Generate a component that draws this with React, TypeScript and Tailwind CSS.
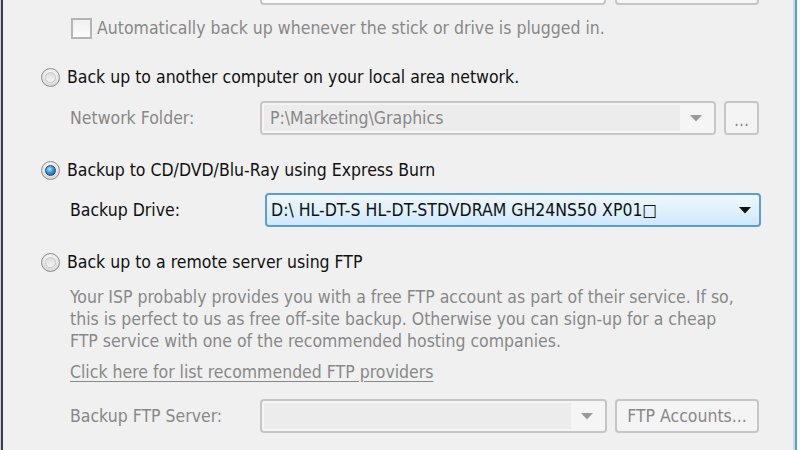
import React from "react";

const FONT = "[font-family:'DejaVu_Sans_Condensed','DejaVu_Sans',sans-serif]";

function Radio({ checked }: { checked?: boolean }) {
  return (
    <span className="flex h-[19px] w-[19px] shrink-0 items-center justify-center rounded-full border border-[#8e8e8e] bg-[radial-gradient(circle_at_50%_35%,#ffffff,#e2e2e2_60%,#c9c9c9)]">
      {checked ? (
        <span className="h-[11px] w-[11px] rounded-full border border-[#1c4f86] bg-[radial-gradient(circle_at_40%_35%,#b8e4ff,#3f93d8_45%,#144f93)]" />
      ) : (
        <span className="h-[11px] w-[11px] rounded-full border border-[#c6c6c6] bg-[linear-gradient(#dcdcdc,#f6f6f6)]" />
      )}
    </span>
  );
}

function Arrow({ dark }: { dark?: boolean }) {
  return (
    <svg width="12" height="7" viewBox="0 0 12 7" className="shrink-0">
      <path d="M0 0 L12 0 L6 6.5 Z" fill={dark ? "#111111" : "#9a9a9a"} />
    </svg>
  );
}

function DisabledCombo({ width, text }: { width: string; text?: string }) {
  return (
    <div
      className={`flex h-[34px] ${width} shrink-0 items-center rounded-[4px] border-2 border-[#c6c6c6] bg-[#f5f5f5] p-[2px]`}
    >
      <div className="flex h-full flex-1 items-center bg-[#ececec] pl-[6px] text-[#888888]">{text}</div>
      <div className="flex h-full w-[32px] items-center justify-center">
        <Arrow />
      </div>
    </div>
  );
}

function DisabledButton({ width, children }: { width: string; children?: React.ReactNode }) {
  return (
    <div
      className={`flex h-[34px] ${width} shrink-0 items-center justify-center rounded-[4px] border-2 border-[#c6c6c6] bg-[#f4f4f4] text-[#888888]`}
    >
      {children}
    </div>
  );
}

export default function App() {
  return (
    <div
      className={`flex h-[450px] w-[800px] overflow-hidden bg-[#f0f0f0] text-[17.5px] leading-[22px] ${FONT}`}
    >
      {/* left window border */}
      <div className="h-full w-[1px] bg-[#cfcfcf]" />
      <div className="h-full w-[2px] bg-[#3b3f45]" />

      <div className="flex flex-1 flex-col">
        {/* top partially visible row */}
        <div className="mt-[-29px] flex h-[34px] shrink-0 pl-[257px]">
          <div className="h-[34px] w-[346px] rounded-[4px] border-2 border-[#c6c6c6] bg-[#fbfbfb]" />
          <div className="ml-[9px] h-[34px] w-[144px] rounded-[4px] border-2 border-[#c6c6c6] bg-[#f6f6f6]" />
        </div>

        {/* checkbox */}
        <div className="mt-[12px] flex h-[22px] items-center pl-[68px]">
          <span className="h-[21px] w-[21px] shrink-0 border-2 border-[#b4b4b4] bg-[linear-gradient(#f0f0f0,#fbfbfb)]" />
          <span className="ml-[5px] text-[#888888]">
            Automatically back up whenever the stick or drive is plugged in.
          </span>
        </div>

        {/* radio 1 */}
        <div className="mt-[27px] flex h-[22px] items-center pl-[38px]">
          <Radio />
          <span className="ml-[7px] text-[#111]">Back up to another computer on your local area network.</span>
        </div>

        {/* network folder */}
        <div className="mt-[13px] flex h-[34px] items-center pl-[67px]">
          <span className="w-[190px] shrink-0 text-[#888888]">Network Folder:</span>
          <DisabledCombo width="w-[456px]" text="P:\Marketing\Graphics" />
          <DisabledButton width="w-[35px] ml-[8px]">
            <span className="mt-[4px]">...</span>
          </DisabledButton>
        </div>

        {/* radio 2 */}
        <div className="mt-[24px] flex h-[22px] items-center pl-[38px]">
          <Radio checked />
          <span className="ml-[7px] text-[#111]">Backup to CD/DVD/Blu-Ray using Express Burn</span>
        </div>

        {/* backup drive */}
        <div className="mt-[12px] flex h-[34px] items-center pl-[67px]">
          <span className="w-[195px] shrink-0 text-[#111]">Backup Drive:</span>
          <div className="flex h-[34px] w-[496px] items-center rounded-[4px] border-2 border-[#5b9ed6] bg-[linear-gradient(#eef7fd,#dff1fc_50%,#cfe8fa)] pl-[4px] pr-[8px]">
            <span className="flex-1 text-[#111]">D:\ HL-DT-S HL-DT-STDVDRAM GH24NS50 XP01□</span>
            <Arrow dark />
          </div>
        </div>

        {/* radio 3 */}
        <div className="mt-[24px] flex h-[22px] items-center pl-[38px]">
          <Radio />
          <span className="ml-[7px] text-[#111]">Back up to a remote server using FTP</span>
        </div>

        {/* paragraph */}
        <div className="mt-[13px] flex flex-col pl-[67px] text-[#888888]">
          <span>Your ISP probably provides you with a free FTP account as part of their service. If so,</span>
          <span>this is perfect to us as free off-site backup. Otherwise you can sign-up for a cheap</span>
          <span>FTP service with one of the recommended hosting companies.</span>
        </div>

        {/* link */}
        <div className="mt-[9px] flex h-[22px] items-center pl-[67px]">
          <span className="text-[#888888] underline underline-offset-[3px]">
            Click here for list recommended FTP providers
          </span>
        </div>

        {/* ftp server */}
        <div className="mt-[16px] flex h-[34px] items-center pl-[67px]">
          <span className="w-[190px] shrink-0 text-[#888888]">Backup FTP Server:</span>
          <DisabledCombo width="w-[347px]" />
          <DisabledButton width="w-[144px] ml-[8px]">FTP Accounts...</DisabledButton>
        </div>
      </div>

      {/* right window border */}
      <div className="h-full w-[2px] bg-[#d6d6d6]" />
      <div className="h-full w-[2px] bg-[#4aa3dc]" />
      <div className="h-full w-[3px] bg-[#fafafa]" />
    </div>
  );
}
